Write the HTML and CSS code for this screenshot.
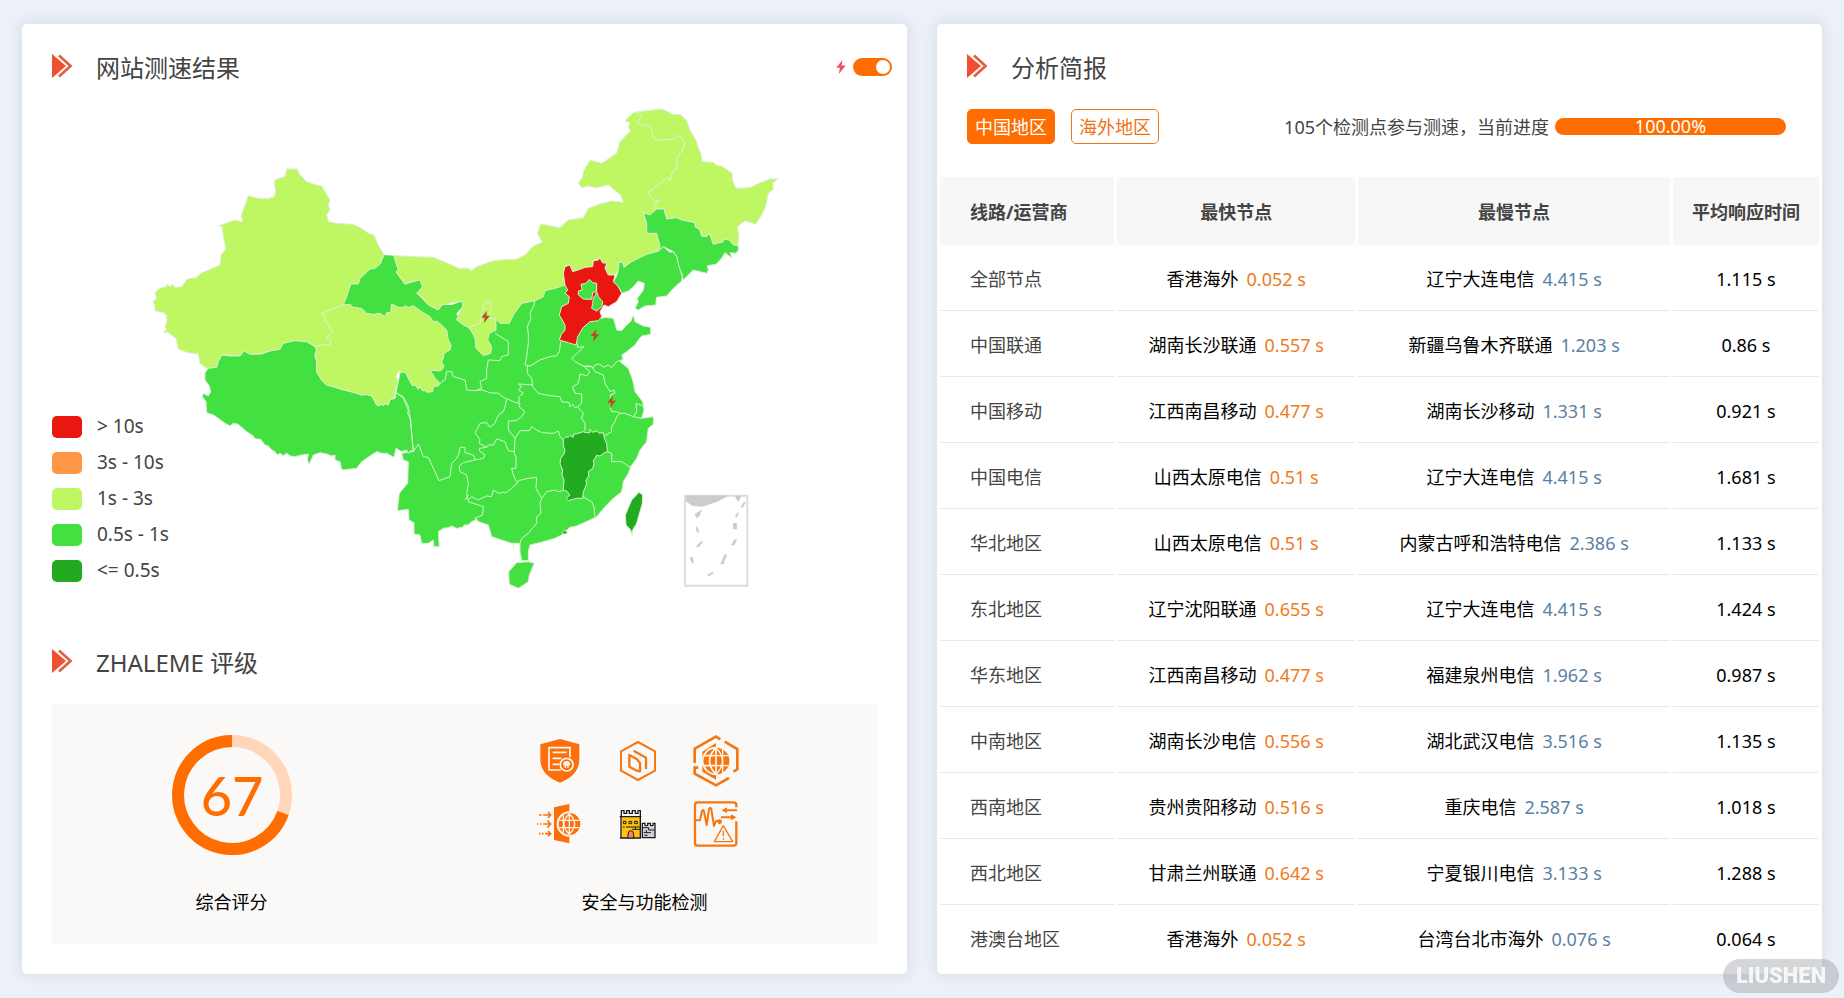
FILE: index.html
```html
<!DOCTYPE html>
<html lang="zh-CN">
<head>
<meta charset="utf-8">
<title>网站测速结果</title>
<link rel="stylesheet" href="styles.css">
</head>
<body>
<svg class="defs" aria-hidden="true">
  <symbol id="chevrons" viewBox="0 0 20 24"><path d="M0 0 14 12 0 24z" fill="#ee5030"/><path d="M7 1.500 18.500 12 7 22.500" fill="none" stroke="#e0603f" stroke-width="2.600"/></symbol>
  <symbol id="bolt" viewBox="0 0 26 38"><path d="M17 0 0 21h10L7 38 26 15H15z"/></symbol>
</svg>
<main class="page">
  <section class="card">
    <header class="head">
      <svg class="mark"><use href="#chevrons"/></svg>
      <h2 class="title">网站测速结果</h2>
      <label class="switch">
        <svg class="switch-bolt"><use href="#bolt"/></svg>
        <input class="toggle" type="checkbox" checked aria-label="闪电标记">
      </label>
    </header>
    <div class="map">
      <svg class="china" viewBox="52 86 826 559" role="img" aria-label="中国地图">
        <g transform="translate(440 240) scale(.333333)" class="land">
          <path class="fast" d="M485 235 495 232 520 235 525 250 530 270 545 272 560 255 572 245 580 225 585 245 610 258 632 262 632 283 605 288 595 300 585 315 560 335 545 345 550 358 540 365 565 385 578 420 585 455 608 485 612 510 605 535 640 530 640 553 625 565 620 605 600 630 590 655 572 680 565 700 550 725 545 755 520 775 495 800 470 830 450 840 410 858 390 862 365 885 345 895 310 905 270 915 265 935 265 962 245 962 240 935 240 910 215 910 185 900 155 890 145 855 115 845 110 838 95 845 85 855 72 855 68 862 50 865 35 858 25 863 10 865 -5 875 -2 920 -18 920 -20 900 -35 910 -55 910 -60 885 -78 882 -78 848 -93 840 -95 808 -128 812 -122 760 -97 730 -95 665 -110 660 -115 640 -82 635 -132 458 -100 300 -60 215 0 220 100 230 250 160 400 100 450 200z"/>
        </g>
        <g transform="translate(140 150) scale(.333333)" class="land">
          <path class="fast noline" d="M733 315 762 317 775 360 768 367 795 403 840 390 848 410 830 430 865 465 895 480 905 465 935 465 967 453 968 470 950 490 950 515 985 535 1010 700 850 700 610 465 632 402 655 402 660 385 690 357 722 340z"/>
          <path class="mid" d="M38 455 50 445 45 428 60 415 78 410 82 403 90 410 98 402 103 412 125 410 142 387 168 383 182 370 240 345 243 315 257 297 245 228 235 228 285 210 305 215 310 210 303 200 325 137 355 145 385 146 403 140 407 125 402 97 408 88 435 80 440 57 472 57 478 72 500 95 520 102 545 108 558 130 570 150 565 165 570 180 560 195 565 215 590 220 640 223 665 235 685 250 702 255 712 280 733 315 725 325 722 340 705 355 690 357 660 385 655 402 632 402 620 440 610 465 545 490 557 500 555 510 578 545 560 562 572 568 570 585 545 585 525 590 500 575 465 572 430 580 420 598 390 603 365 612 330 613 312 603 300 618 270 615 245 615 235 635 230 652 200 655 180 640 175 612 145 608 115 598 108 565 90 552 82 545 78 550 70 545 80 540 75 530 80 520 80 495 70 488 45 482 45 465z"/>
          <path class="fast" d="M205 655 230 652 235 635 245 615 270 618 300 618 312 603 330 613 365 612 390 603 420 598 430 580 465 572 500 575 525 590 530 600 525 615 530 635 530 665 545 690 560 705 580 710 605 718 645 728 665 735 690 733 700 745 710 765 730 760 745 765 750 748 765 745 768 728 790 740 805 770 810 800 815 850 818 880 820 905 812 902 805 910 800 900 785 905 768 895 762 922 740 910 725 910 710 905 690 918 665 935 650 955 605 960 600 935 585 930 585 915 575 918 560 912 540 908 520 915 508 942 502 930 505 912 485 915 465 920 450 918 440 910 430 917 420 910 412 915 405 905 395 900 385 888 375 885 362 868 345 866 340 858 320 845 295 823 280 820 270 828 255 820 235 805 220 795 200 788 198 755 187 740 190 730 205 738 212 725 208 708 195 690 195 668z"/>
          <path class="mid" d="M545 490 610 465 630 463 640 472 665 475 680 490 700 493 720 490 735 500 740 488 752 487 755 462 775 472 790 472 795 467 805 472 820 467 845 485 870 500 880 515 890 513 905 525 920 540 925 570 933 585 930 600 912 610 910 625 905 635 912 650 905 660 895 663 870 660 885 685 890 690 900 700 895 708 880 710 878 725 860 727 855 720 848 723 840 710 835 718 825 705 818 708 810 695 797 668 775 665 768 680 775 695 768 710 765 728 765 745 750 748 745 765 735 760 730 768 725 762 718 768 710 765 700 745 695 733 690 738 680 733 665 735 645 728 605 718 580 710 560 705 545 690 530 665 530 635 525 615 530 600 525 590 545 585 570 585 572 568 560 562 578 545 555 510 557 500z"/>
        </g>
        <g transform="translate(500 90) scale(.333333)" class="land">
          <path class="mid" d="M-318 497-200 502-180 510-145 525-125 535-95 535-87 542-70 530-20 512 0 510 50 507 75 495 100 468 127 457 112 430 122 402 180 413 205 390 250 383 265 355 300 342 335 333 370 337 362 315 325 285 290 293 265 288 245 293 235 278 248 262 250 245 270 210 305 220 350 190 360 155 392 122 385 110 390 98 375 92 400 68 412 65 425 80 410 98 430 108 440 103 453 115 460 145 475 150 520 148 530 135 545 145 555 160 548 180 530 205 532 235 520 240 510 272 500 265 445 308 465 335 480 330 465 345 470 357 450 375 430 368 440 400 440 430 470 430 480 468 475 483 440 493 415 505 380 525 370 530 368 518 357 515 355 540 345 555 322 553 315 535 320 520 305 518 300 505 280 512 278 530 240 538 218 545 210 525 195 530 190 550 195 585 165 595 135 602 130 620 105 632 65 640 40 675 28 700 0 700-12 687-95 712-105 708-130 690-120 665-110 645-115 633-150 640-175 645-185 660-215 645-230 625-250 610-232 590-240 570-265 575-285 583-305 555-312 545-305 540-315 510z"/>
          <path class="mid" d="M412 65 485 57 520 73 540 73 560 92 570 120 590 155 595 175 603 190 607 215 640 217 650 227 665 228 697 250 697 270 708 295 750 293 780 278 810 267 833 266 818 280 820 298 805 310 797 350 785 375 767 403 735 392 712 410 717 440 713 467 700 465 688 450 670 455 640 463 628 430 620 440 605 438 600 420 585 410 585 398 545 390 530 383 500 387 492 357 470 357 465 345 480 330 465 335 445 308 500 265 510 272 520 240 532 235 530 205 548 180 555 160 545 145 530 135 520 148 475 150 460 145 453 115 440 103 430 108 410 98 425 80z"/>
          <path class="fast" d="M470 357 492 357 500 387 530 383 545 390 585 398 585 410 600 420 605 438 620 440 628 430 640 463 670 455 672 448 688 450 700 465 715 467 715 480 708 490 690 488 697 505 675 488 665 505 648 523 622 527 625 540 620 550 600 545 580 540 565 555 550 570 545 550 535 530 530 500 520 485 500 475 490 470 475 483 480 468 470 430 440 430 440 400 430 368 450 375z"/>
          <path class="fast" d="M475 483 490 470 510 487 520 485 530 500 537 530 547 560 545 573 520 595 500 618 470 622 467 645 435 648 415 660 405 655 415 635 412 625 430 600 433 580 415 573 400 590 385 603 365 610 355 590 340 575 350 558 355 540 357 515 368 518 372 532 395 515 415 505 440 493z"/>
          <path class="slow" d="M190 550 195 530 210 525 218 545 240 538 255 532 278 530 280 512 295 510 300 503 307 518 320 520 315 535 325 555 345 555 340 575 355 590 365 610 350 635 325 650 312 645 300 665 305 680 295 692 270 695 250 712 233 740 228 765 205 758 178 750 183 735 195 720 195 705 178 675 185 650 205 640 208 620 195 610 203 600 195 585z"/>
          <path class="fast" d="M268 568 278 578 290 580 290 603 278 608 275 628 250 627 235 615 235 603 247 600 243 583 258 580zM280 625 290 605 295 620 308 635 305 650 290 663 275 655 278 640z"/>
          <path class="slow noline" d="M279 609h6v8h-6z"/>
        </g>
        <g transform="translate(440 240) scale(.333333)" class="land">
          <path class="mid" d="M85 262 120 250 125 215 135 188 150 183 153 200 145 235 168 237 168 270 148 280 143 300 155 320 152 340 130 347 108 325 105 295 95 275z"/>
          <path class="best" d="M370 598 378 590 385 592 390 586 400 592 400 583 412 581 430 575 438 578 450 578 450 568 458 577 470 573 478 580 490 578 493 595 500 610 502 635 490 640 480 648 470 646 465 655 460 662 462 672 458 685 445 695 446 708 438 722 440 732 430 755 428 775 410 775 385 782 378 775 390 765 380 753 370 750 372 720 366 705 368 690 360 672 362 655 372 642 375 630 370 618z"/>
          <path class="best" d="M597 757 608 765 607 790 590 850 578 870 577 888 572 870 558 855 556 825 575 780z"/>
          <path class="best" d="M366 877 373 871 382 875 380 882 370 882z"/>
          <path class="fast" d="M230 968 265 965 283 970 268 1005 265 1025 235 1045 208 1033 206 995z"/>
          <g class="lines">
            <path d="M285 182 280 200 270 220 273 235 262 260 265 280 265 310 260 350 255 375 270 378 300 360 330 350 350 347 358 335 362 305"/>
            <path d="M262 378 262 400 275 415 278 440 295 460 330 467 360 470 365 485 388 488 390 500 398 493 405 503 413 500"/>
            <path d="M278 435 235 432 245 440 235 450 250 460 237 470 237 490M195 475 175 460 150 458 125 450 105 452 80 450 75 420 40 410 35 395 20 395 15 420 5 425-5 437"/>
            <path d="M165 280 205 305 205 345 185 350 180 362 145 360 140 390 140 415 120 425 125 445 110 450"/>
            <path d="M412 310 412 322 432 320 395 355 405 365 430 378 450 378 460 383 465 375 480 372 490 382 505 375 515 383 530 365 550 358"/>
            <path d="M435 380 455 380 465 395 490 405 495 430 510 455 522 450 525 460 510 465 515 480 510 500 515 515 530 515 540 520 555 520 580 530 605 535M580 530 590 515 588 490 608 498"/>
            <path d="M430 378 450 395 440 408 420 402 415 430 398 440 405 460 425 462 425 490 413 500 430 520 425 535 435 550 435 572"/>
            <path d="M540 520 530 530 525 545 515 560 515 575 495 587M502 635 515 640 515 665 545 665 560 675 572 682M428 770 455 785 462 800 465 830"/>
            <path d="M195 475 205 478 225 487 240 490 237 500 255 515 245 530 230 542 205 543 205 570 225 595"/>
            <path d="M200 478 195 500 190 515 180 520 170 535 165 550 150 562 140 548 120 550 105 580 120 598 118 610 140 622 145 615 160 615 170 597 195 605 200 620 205 632 222 635"/>
            <path d="M225 595 240 572 268 572 275 560 290 570 305 578 340 580 355 573 360 590 370 600M225 595 223 640 228 650 228 685 215 685 220 705 232 730"/>
            <path d="M85 780 95 770 115 780 140 768 155 770 160 750 175 760 185 757 200 757 215 745 232 730 235 722 265 715 290 712 288 745 305 775 320 755 345 750 355 755 370 752"/>
            <path d="M305 775 300 790 303 820 290 830 290 850 265 880 245 895 240 910"/>
            <path d="M140 622 118 625 118 632 135 645 130 655 105 660 70 668 58 678 60 695 80 705 85 730 80 760 85 785 130 800 128 825 105 835 110 845M75 780 85 765"/>
            <path d="M-132 458-110 475-95 510-97 520-88 540-85 580-80 635-65 612-50 650-35 652-3 722 30 710 35 670 50 655 57 640 60 622 75 622 75 638 100 645 105 658"/>
            <path d="M220 912v18M245 963h22"/>
          </g>
          <g class="inset">
            <path class="frame" d="M735 767H922V1037H735z"/>
            <path d="M738 769H862L830 785 790 799 758 797 740 785zM886 769H904L894 785zM765 822 785 810 778 828 770 834zM903 800 912 786 916 788 907 804zM886 830 892 818 896 820 890 832zM880 850h10v17h-10zM874 915 884 898 890 900 882 916zM842 972 854 944 860 944 850 972zM768 920 784 904 788 906 776 920zM768 858 774 866 776 878 770 874zM751 952 758 952 761 970 754 966zM802 1006 818 996 820 1000 808 1007z"/>
          </g>
        </g>
        <g transform="translate(440 240) scale(.333333)" fill="#b5501c">
          <use href="#bolt" x="124" y="212" width="26" height="38"/>
          <use href="#bolt" x="452" y="267" width="26" height="38"/>
          <use href="#bolt" x="502" y="467" width="26" height="38"/>
        </g>
      </svg>
      <ul class="legend">
        <li><i class="swatch slow"></i>&gt; 10s</li>
        <li><i class="swatch warn"></i>3s - 10s</li>
        <li><i class="swatch mid"></i>1s - 3s</li>
        <li><i class="swatch fast"></i>0.5s - 1s</li>
        <li><i class="swatch best"></i>&lt;= 0.5s</li>
      </ul>
    </div>
    <header class="head">
      <svg class="mark"><use href="#chevrons"/></svg>
      <h2 class="title">ZHALEME 评级</h2>
    </header>
    <div class="rating">
      <div class="cell">
        <svg class="gauge" viewBox="0 0 120 120">
          <circle cx="60" cy="60" r="54" fill="none" stroke="#ffd6b9" stroke-width="12"/>
          <path d="M60 6A54 54 0 1 0 111 78" fill="none" stroke="#ff6d00" stroke-width="12"/>
          <text class="score" x="60" y="81" text-anchor="middle">67</text>
        </svg>
        <p class="caption">综合评分</p>
      </div>
      <div class="cell">
        <div class="icons">
          <svg class="icon" viewBox="108 74 144 156"><path d="M180 86 238 102V150Q236 195 180 217 123 195 121 150V102z" fill="#fb6f0d"/><g fill="none" stroke="#fff6ea" stroke-width="5"><path d="M182 179H147V112H210V141M158 126H200M158 144H184M158 162H178"/><circle cx="200" cy="163" r="19" fill="#fb6f0d"/></g><path d="M189 164Q189 152 200 152 211 152 211 164L206 166V173H202V167H198V173H194V166z" fill="#fff6ea"/></svg>
          <svg class="icon" viewBox="339 74 144 156"><g fill="none" stroke="#f57713" stroke-width="6" stroke-linejoin="round"><path d="M411 95 462 123V181L411 209 360 181V123z"/><path d="M385 134 408 147 417 158V183L407 181 385 169zM398 121 435 142V176" stroke-width="7"/></g></svg>
          <svg class="icon" viewBox="573 74 144 156"><g fill="none" stroke="#f57713" stroke-width="8"><path d="M581 158V115L645 79 658 87M671 94 709 116V177L697 184M684 203 645 225 581 190V172H592"/></g><path d="M645 98V208L604 184V124z" fill="#f57713"/><circle cx="645" cy="152" r="40" fill="#f57713"/><g fill="none" stroke="#fff4e8" stroke-width="5"><path d="M645 112A40 40 0 0 0 645 192M607 136H645M605 166H645M645 112Q606 152 645 192M645 112V192"/><path d="M645 112Q684 152 645 192M648 136H682M648 166H682M665 114V190" stroke-width="4"/></g></svg>
          <svg class="icon" viewBox="108 263 144 156"><path d="M162 291 208 281V399L162 389z" fill="#fb6f0d"/><circle cx="208" cy="341" r="33" fill="#fb6f0d"/><g fill="none" stroke="#fff4e8" stroke-width="4"><path d="M208 306A35 35 0 0 0 208 376" stroke-width="6"/><path d="M208 310Q176 341 208 372M208 310Q240 341 208 372M208 308V374M177 330H239M177 352H239M190 315V367"/></g><g fill="none" stroke="#f57713" stroke-width="5"><path d="M117 314h8m4 0h22M111 341h4m5 0h4m5 0h22M117 370h5m4 0h5m4 0h16M144 305 152 314 144 323M142 331 152 341 142 352M144 362 152 370 144 378"/></g></svg>
          <svg class="icon" viewBox="339 263 144 156"><path d="M361 319H419V382H361z" fill="#ffc20e"/><path d="M424 350H462V382H424z" fill="#ccd2d8"/><g fill="none" stroke="#1c1c22" stroke-width="4"><path d="M356 319H421M361 319V301H369V309H377V301H385V309H394V301H403V309H411V301H418V383H357M360 319V382M424 346V339H432V346H440V339H448V346H456V339H462V382H424z"/><path d="M367 340V333H375V340zM384 340V333H392V340zM401 340V333H409V340zM366 350h5M375 350H416M393 357H418M403 350V358M426 352H443V359H461M428 367H450M436 359V367M430 375h10" stroke-width="3"/></g><path d="M381 383V371Q382 361 389 361 397 361 398 371V383z" fill="#ff815c" stroke="#1c1c22" stroke-width="3"/></svg>
          <svg class="icon" viewBox="573 263 144 156"><g fill="none" stroke="#f57713" stroke-width="6" stroke-linejoin="round"><path d="M706 291V284Q706 276 698 276H590Q582 276 582 284V398Q582 406 590 406H698Q706 406 706 398V333" stroke-width="7"/><path d="M584 330H597L603 302Q606 295 609 303L617 344 624 297Q628 288 631 297L639 347 645 332H655M708 300H668M660 321H700"/><path d="M667 346 695 394H640z" stroke-width="4"/><path d="M667 361V378M667 383V388" stroke-width="4"/></g><path d="M662 300 678 291V309zM706 321 690 312V330z" fill="#f57713"/><circle cx="656" cy="334" r="7" fill="#f57713"/></svg>
        </div>
        <p class="caption">安全与功能检测</p>
      </div>
    </div>
  </section>

  <section class="card">
    <header class="head">
      <svg class="mark"><use href="#chevrons"/></svg>
      <h2 class="title">分析简报</h2>
    </header>
    <div class="toolbar">
      <button class="tab tab-on" type="button">中国地区</button>
      <button class="tab" type="button">海外地区</button>
      <span class="status">105个检测点参与测速，当前进度</span>
      <div class="bar" role="progressbar" aria-valuenow="100" aria-label="当前进度">100.00%</div>
    </div>
    <table class="report">
      <colgroup><col class="c1"><col class="c2"><col class="c3"><col class="c4"></colgroup>
      <thead><tr><th>线路/运营商</th><th>最快节点</th><th>最慢节点</th><th>平均响应时间</th></tr></thead>
      <tbody>
        <tr><td>全部节点</td><td>香港海外<b class="best-time">0.052 s</b></td><td>辽宁大连电信<b class="worst-time">4.415 s</b></td><td>1.115 s</td></tr>
        <tr><td>中国联通</td><td>湖南长沙联通<b class="best-time">0.557 s</b></td><td>新疆乌鲁木齐联通<b class="worst-time">1.203 s</b></td><td>0.86 s</td></tr>
        <tr><td>中国移动</td><td>江西南昌移动<b class="best-time">0.477 s</b></td><td>湖南长沙移动<b class="worst-time">1.331 s</b></td><td>0.921 s</td></tr>
        <tr><td>中国电信</td><td>山西太原电信<b class="best-time">0.51 s</b></td><td>辽宁大连电信<b class="worst-time">4.415 s</b></td><td>1.681 s</td></tr>
        <tr><td>华北地区</td><td>山西太原电信<b class="best-time">0.51 s</b></td><td>内蒙古呼和浩特电信<b class="worst-time">2.386 s</b></td><td>1.133 s</td></tr>
        <tr><td>东北地区</td><td>辽宁沈阳联通<b class="best-time">0.655 s</b></td><td>辽宁大连电信<b class="worst-time">4.415 s</b></td><td>1.424 s</td></tr>
        <tr><td>华东地区</td><td>江西南昌移动<b class="best-time">0.477 s</b></td><td>福建泉州电信<b class="worst-time">1.962 s</b></td><td>0.987 s</td></tr>
        <tr><td>中南地区</td><td>湖南长沙电信<b class="best-time">0.556 s</b></td><td>湖北武汉电信<b class="worst-time">3.516 s</b></td><td>1.135 s</td></tr>
        <tr><td>西南地区</td><td>贵州贵阳移动<b class="best-time">0.516 s</b></td><td>重庆电信<b class="worst-time">2.587 s</b></td><td>1.018 s</td></tr>
        <tr><td>西北地区</td><td>甘肃兰州联通<b class="best-time">0.642 s</b></td><td>宁夏银川电信<b class="worst-time">3.133 s</b></td><td>1.288 s</td></tr>
        <tr><td>港澳台地区</td><td>香港海外<b class="best-time">0.052 s</b></td><td>台湾台北市海外<b class="worst-time">0.076 s</b></td><td>0.064 s</td></tr>
      </tbody>
    </table>
  </section>
</main>
<div class="watermark">LIUSHEN</div>
</body>
</html>
```
FILE: styles.css
```css
* { box-sizing: border-box; }
body {
  margin: 0;
  background: #ecf0f8;
  color: #444;
  font: 18px/24px "Noto Sans", "Noto Sans CJK SC", sans-serif;
}
.defs { position: absolute; width: 0; height: 0; }
.page {
  display: grid;
  grid-template-columns: 1fr 1fr;
  gap: 30px;
  padding: 24px 22px;
}
.card {
  background: #fff;
  border-radius: 5px;
  padding: 26px 0 0;
  box-shadow: 0 0 14px 3px rgba(0, 0, 0, .07);
  min-width: 0;
}
.head {
  display: flex;
  align-items: center;
  height: 36px;
  padding: 0 15px 0 30px;
}
.mark { width: 20px; height: 24px; margin: 0 24px 4px 0; }
.title { margin: 0; padding-bottom: 1px; font-size: 24px; line-height: 34px; font-weight: 400; }
.switch { display: flex; align-items: center; gap: 7px; margin-left: auto; padding-bottom: 2px; }
.switch-bolt { width: 10px; height: 14px; fill: #f0506e; }
.toggle {
  appearance: none;
  display: flex;
  width: 39px;
  height: 18px;
  margin: 0;
  padding: 2px;
  border-radius: 9px;
  background: #ff6d00;
  justify-content: flex-end;
}
.toggle::before { content: ""; width: 14px; height: 14px; border-radius: 50%; background: #fff; }

.map { display: grid; padding: 0 29px 0 30px; }
.china, .legend { grid-area: 1 / 1; }
.china { display: block; width: 100%; }
.land path { stroke: #dcefd2; stroke-width: 3; stroke-linejoin: round; }
.land .noline { stroke: none; }
.land .lines path { fill: none; stroke: #d2f7cc; }
.land .inset path { fill: #ccc; stroke: #bbb; stroke-width: 1; }
.land .inset .frame { fill: #fff; stroke: #ddd; stroke-width: 6; }
.slow { fill: #e91710; background: #e91710; }
.warn { background: #ff9645; }
.mid { fill: #bff763; background: #bff763; }
.fast { fill: #42e040; background: #42e040; }
.best { fill: #22ab20; background: #22ab20; }
.legend {
  align-self: end;
  justify-self: start;
  margin: 0;
  padding: 0 0 56px;
  list-style: none;
  font-size: 19px;
}
.legend li { display: flex; align-items: flex-start; gap: 15px; height: 36px; line-height: 22px; padding-top: 6px; }
.swatch { width: 30px; height: 22px; margin-top: 1px; border-radius: 5px; }

.rating {
  display: grid;
  grid-template-columns: 10fr 13fr;
  margin: 23px 29px 30px 30px;
  padding: 31px 0 30px;
  background: #fbf9f7;
}
.cell { display: flex; flex-direction: column; align-items: center; gap: 35px; }
.gauge { width: 120px; height: 120px; }
.score { font: 500 54px Lato, sans-serif; fill: #ff6d00; }
.caption { margin: 0; color: #000; }
.icons {
  display: grid;
  grid-template-columns: repeat(3, 48px);
  gap: 11px 30px;
  height: 120px;
  margin-right: 14px;
  align-content: start;
}
.icon { width: 48px; height: 52px; }

.toolbar { display: flex; align-items: center; padding: 23px 36px 33px 30px; }
.tab {
  height: 35px;
  margin-right: 16px;
  padding: 0 7px;
  border: 1px solid #ea7a1e;
  border-radius: 5px;
  background: #fff;
  color: #ee7212;
  font: inherit;
}
.tab-on { background: #ff6d00; border-color: #ff6d00; color: #fff; }
.status { margin-left: auto; }
.bar {
  width: 231px;
  height: 17px;
  margin-left: 6px;
  border-radius: 9px;
  background: #ff6d00;
  color: #fff;
  line-height: 17px;
  text-align: center;
}
.report {
  width: 100%;
  table-layout: fixed;
  border-collapse: separate;
  border-spacing: 3px 0;
}
.c1 { width: 20%; }
.c2 { width: 27.4%; }
.c3 { width: 35.8%; }
.c4 { width: 16.8%; }
.report th, .report td { padding: 2px 0 0; text-align: center; white-space: nowrap; }
.report th { height: 68px; background: #f7f7f7; font-weight: 700; }
.report td { height: 66px; border-bottom: 1px solid #e8e8e8; color: #000; }
.report th:first-child, .report td:first-child { padding-left: 30px; text-align: left; color: #444; }
.report tr:last-child td { border-bottom: 0; }
.report b { margin-left: 8px; font-weight: 400; }
.report .best-time { color: #ee7a1c; }
.report .worst-time { color: #5b7fa3; }
.watermark {
  position: fixed;
  right: 5px;
  bottom: 5px;
  width: 116px;
  height: 34px;
  border-radius: 17px;
  background: rgba(150, 152, 155, .4);
  color: #f4f6f8;
  font: 900 22px/34px Roboto, sans-serif;
  text-align: center;
}
```
